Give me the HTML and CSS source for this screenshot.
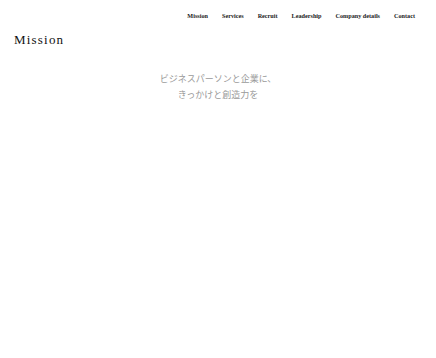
FILE: index.html
```html
<!DOCTYPE html>
<html lang="ja">
<head>
<meta charset="utf-8">
<link rel="stylesheet" href="styles.css">
</head>
<body>
<header class="header">
  <nav class="nav">
    <a href="#">Mission</a>
    <a href="#">Services</a>
    <a href="#">Recruit</a>
    <a href="#">Leadership</a>
    <a href="#">Company details</a>
    <a href="#">Contact</a>
  </nav>
</header>
<main class="main">
  <h1 class="title">Mission</h1>
  <p class="lead">ビジネスパーソンと企業に、<br>きっかけと創造力を</p>
</main>
</body>
</html>
```
FILE: styles.css
```css
html, body { margin: 0; padding: 0; background: #fff; }
body { font-family: "Liberation Serif", "DejaVu Serif", serif; color: #222; }
.header { display: flex; justify-content: flex-end; padding: 11px 21px 0 0; }
.nav { display: flex; gap: 14px; }
.nav a { font-size: 6.2px; font-weight: bold; color: #222; text-decoration: none; line-height: 10px; }
.main { padding: 0 14px; }
.title { margin: 11px 0 0 0; font-size: 13px; font-weight: normal; letter-spacing: 1.2px; line-height: 16px; color: #111; }
.lead { margin: 23px 0 0 0; text-align: center; font-family: "Noto Sans CJK JP", sans-serif; font-size: 9px; line-height: 16px; color: #9a9a9a; }
```
